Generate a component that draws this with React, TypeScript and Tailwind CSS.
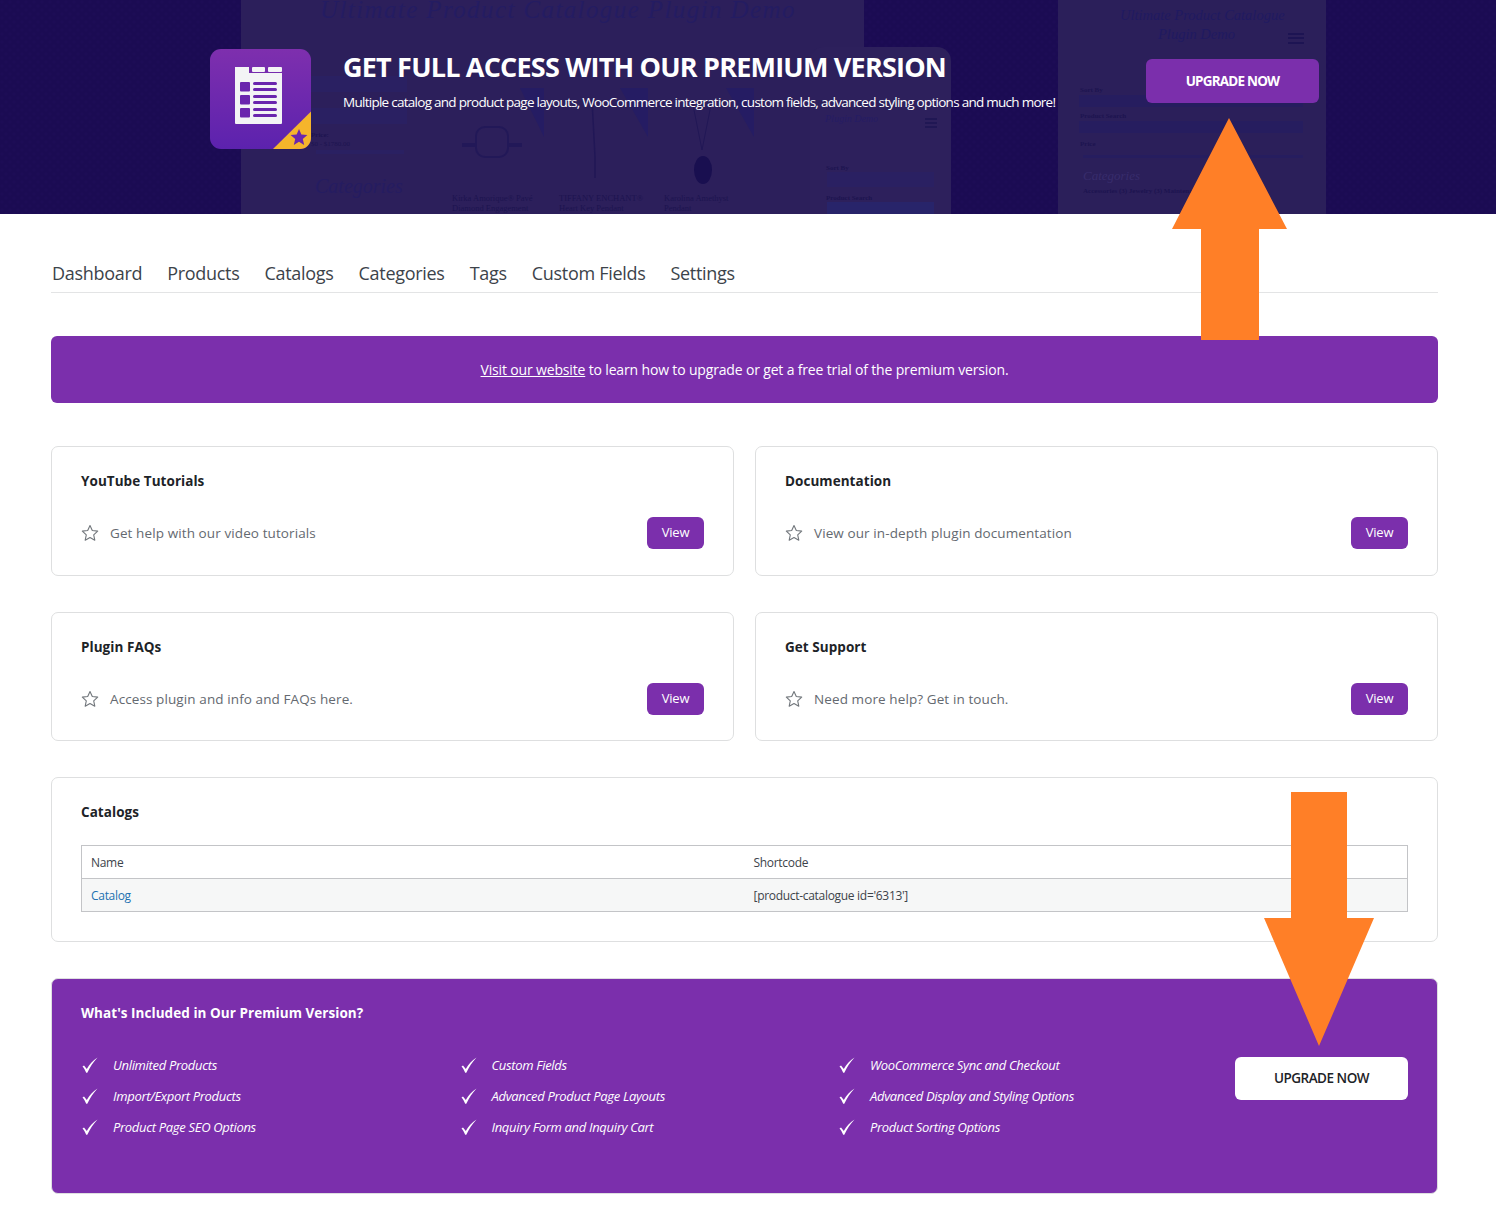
// ─── Banner backdrop (faded plugin screenshots) ──────────

function BannerBackdrop() {
  return (
    <svg className="absolute inset-0" width="1496" height="214" viewBox="0 0 1496 214" aria-hidden="true">
      <defs>
        <pattern id="banner-dots" width="8" height="8" patternUnits="userSpaceOnUse">
          <rect width="8" height="8" fill="#1b0b53" />
          <circle cx="2" cy="2" r="1.500" fill="#1d0c56" />
          <circle cx="6" cy="6" r="1.500" fill="#1d0c56" />
        </pattern>
      </defs>
      <rect width="1496" height="214" fill="url(#banner-dots)" />

      {/* Desktop screenshot */}
      <rect x="241" width="623" height="214" fill="#2c1f5b" />
      <g fontFamily="'Liberation Serif', serif">
        <text x="320" y="18" fontSize="25" fontStyle="italic" letterSpacing="1.400" fill="#241c62">Ultimate Product Catalogue Plugin Demo</text>
        <g fill="#2a2062">
          <rect x="311" y="76" width="96" height="16" />
          <rect x="311" y="108" width="96" height="16" />
          <rect x="316" y="150" width="88" height="4" />
        </g>
        <text x="311" y="137" fontSize="7" fontWeight="700" fill="#1d1450">Price:</text>
        <text x="311" y="146" fontSize="7" fill="#1d1450">$0 - $1780.00</text>
        <text x="315" y="193" fontSize="20" fontStyle="italic" fill="#251c61">Categories</text>
        <path d="M520 88h24v49zM620 88h28v49zM726 88h28v49z" fill="#251c63" />
        <rect x="476" y="127" width="32" height="30" rx="9" fill="none" stroke="#221858" strokeWidth="2" />
        <path d="M462 145h14M508 145h14" stroke="#221858" strokeWidth="4" />
        <path d="M592 100l3 57v21" fill="none" stroke="#211756" strokeWidth="1.500" />
        <path d="M692 100l10 50M712 100l-10 50" fill="none" stroke="#211756" strokeWidth="1" />
        <ellipse cx="703" cy="170" rx="9" ry="14" fill="#190f50" />
        <g fontSize="8.500" fill="#1d1450">
          <text x="452" y="201">Kirka Amorique® Pavé</text>
          <text x="452" y="211">Diamond Engagement</text>
          <text x="559" y="201">TIFFANY ENCHANT®</text>
          <text x="559" y="211">Heart Key Pendant</text>
          <text x="664" y="201">Karolina Amethyst</text>
          <text x="664" y="211">Pendant</text>
        </g>

        {/* Phone over the desktop screenshot */}
        <path d="M810 214V61a14 14 0 0 1 14-14h113a14 14 0 0 1 14 14v153z" fill="#2d205c" />
        <text x="825" y="122" fontSize="10" fontStyle="italic" fill="#251c64">Plugin Demo</text>
        <path d="M925 119h12M925 123h12M925 127h12" stroke="#1d1452" strokeWidth="1.500" />
        <text x="826" y="170" fontSize="7" fontWeight="700" fill="#1d1450">Sort By</text>
        <rect x="827" y="172" width="107" height="15" fill="#2a2062" />
        <text x="826" y="200" fontSize="7" fontWeight="700" fill="#1d1450">Product Search</text>
        <rect x="827" y="202" width="107" height="12" fill="#28246a" />

        {/* Right phone */}
        <rect x="1058" width="268" height="214" fill="#2b1f5a" />
        <text x="1120" y="20" fontSize="14.500" fontStyle="italic" fill="#201a61">Ultimate Product Catalogue</text>
        <text x="1158" y="39" fontSize="14.500" fontStyle="italic" fill="#201a61">Plugin Demo</text>
        <path d="M1288 34h16M1288 38h16M1288 43h16" stroke="#1a1252" strokeWidth="1.500" />
        <text x="1080" y="92" fontSize="7" fontWeight="700" fill="#1d1450">Sort By</text>
        <rect x="1079" y="95" width="224" height="12" fill="#261d5f" />
        <text x="1080" y="118" fontSize="7" fontWeight="700" fill="#1d1450">Product Search</text>
        <rect x="1079" y="121" width="224" height="12" fill="#261d5f" />
        <text x="1080" y="146" fontSize="7" fontWeight="700" fill="#1d1450">Price</text>
        <rect x="1083" y="155" width="220" height="3" fill="#261d5f" />
        <text x="1083" y="180" fontSize="13" fontStyle="italic" fill="#382c6c">Categories</text>
        <text x="1083" y="193" fontSize="7" fontWeight="700" fill="#1d1450">Accessories (3)   Jewelry (3)   Maintenance (1)</text>
      </g>
    </svg>
  );
}

// ─── Logo ────────────────────────────────────────────────

function PluginLogo() {
  return (
    <svg width="101" height="100" viewBox="0 0 101 100" className="shrink-0">
      <defs>
        <linearGradient id="logo-bg" x1="0" y1="0" x2="0" y2="1">
          <stop offset="0" stopColor="#7e2fae" />
          <stop offset="1" stopColor="#5c22ae" />
        </linearGradient>
        <clipPath id="logo-clip">
          <rect width="101" height="100" rx="11" />
        </clipPath>
      </defs>
      <g clipPath="url(#logo-clip)">
        <rect width="101" height="100" fill="url(#logo-bg)" />
        <path d="M101 62.500V100H63z" fill="#f5b52b" />
      </g>
      <path d="M25 18h14v6h33v50a1 1 0 0 1-1 1H26a1 1 0 0 1-1-1z" fill="#f3f4f5" />
      <rect x="42" y="18" width="13" height="5" rx="1" fill="#f3f4f5" />
      <rect x="58" y="18" width="14" height="5" rx="1" fill="#f3f4f5" />
      <g fill="#6a26ad">
        <rect x="30" y="33" width="10" height="9.500" rx="1" />
        <rect x="30" y="46" width="10" height="9.500" rx="1" />
        <rect x="30" y="59" width="10" height="9.500" rx="1" />
        <rect x="43" y="33" width="24" height="3" rx="1.500" />
        <rect x="43" y="39" width="24" height="3" rx="1.500" />
        <rect x="43" y="46" width="24" height="3" rx="1.500" />
        <rect x="43" y="52" width="24" height="3" rx="1.500" />
        <rect x="43" y="59" width="24" height="3" rx="1.500" />
        <rect x="43" y="65" width="24" height="3" rx="1.500" />
        <path d="M89 80l2.400 5.600 6 .5-4.600 4 1.400 5.900-5.200-3.200-5.200 3.200 1.400-5.900-4.600-4 6-.5z" />
      </g>
    </svg>
  );
}

// ─── Small parts ─────────────────────────────────────────

function StarOutline() {
  return (
    <svg width="18" height="18" viewBox="0 0 18 18" className="shrink-0" fill="none">
      <path d="M9 1.500l2.300 5 5.400.6-4 3.700 1.100 5.400L9 13.500l-4.800 2.700 1.100-5.400-4-3.700 5.400-.6z" stroke="#72777c" strokeWidth="1.100" strokeLinejoin="round" />
    </svg>
  );
}

function Check() {
  return (
    <svg width="16" height="16" viewBox="0 0 16 16" className="ml-px mb-[2px] shrink-0" fill="#fff">
      <path d="M.5 9.500L2 8.400l2.800 3.600C7.300 7.700 10.600 3.700 15.500.5 11.300 5 8.200 9.800 5.300 15.800H4.200C3.200 13.200 2 11.200.5 9.500z" />
    </svg>
  );
}

function HelpCard({ title, text, height }: { title: string; text: string; height: string }) {
  return (
    <div className={`flex flex-1 flex-col rounded-[7px] border border-[#dedfe0] bg-white pl-[29px] pr-[29px] pt-[24px] ${height}`}>
      <h3 className="text-[13.500px] font-bold leading-[20px] tracking-[0.05px] text-[#1d2327]">{title}</h3>
      <div className="mt-[26px] flex items-center justify-between">
        <div className="flex items-center gap-[11px]">
          <StarOutline />
          <span className="text-[13.500px] tracking-[0.1px] text-[#646970]">{text}</span>
        </div>
        <button className="h-[32px] w-[57px] rounded-[6px] bg-[#7b2fac] text-[13px] font-medium tracking-[-0.2px] text-white">View</button>
      </div>
    </div>
  );
}

const TABS = ["Dashboard", "Products", "Catalogs", "Categories", "Tags", "Custom Fields", "Settings"];

const FEATURES = [
  ["Unlimited Products", "Import/Export Products", "Product Page SEO Options"],
  ["Custom Fields", "Advanced Product Page Layouts", "Inquiry Form and Inquiry Cart"],
  ["WooCommerce Sync and Checkout", "Advanced Display and Styling Options", "Product Sorting Options"],
];

// ─── Page ────────────────────────────────────────────────

export default function App() {
  return (
    <div className="relative h-[1208px] overflow-hidden bg-white font-['Open_Sans',sans-serif] text-[#3c434a]">
      {/* Upgrade banner */}
      <header className="relative h-[214px] bg-[#1b0b53]">
        <BannerBackdrop />
        <div className="relative flex items-start pl-[210px] pt-[49px]">
          <PluginLogo />
          <div className="ml-[32px] w-[803px]">
            <h1 className="text-[27px] font-bold leading-[36px] tracking-[-0.8px] text-white">
              GET FULL ACCESS WITH OUR PREMIUM VERSION
            </h1>
            <p className="mt-[7px] text-[13.500px] leading-[20px] tracking-[-0.73px] text-white">
              Multiple catalog and product page layouts, WooCommerce integration, custom fields, advanced styling options and much more!
            </p>
          </div>
          <button className="mt-[10px] h-[44px] w-[173px] rounded-[6px] bg-[#7b2fac] text-[13.500px] font-bold tracking-[-0.8px] text-white">
            UPGRADE NOW
          </button>
        </div>
      </header>

      <main className="pl-[51px] pr-[58px]">
        {/* Tabs */}
        <nav className="mt-[44px] flex h-[35px] items-start gap-[25px] border-b border-[#e3e4e5] pl-px text-[18px] font-medium leading-[30px] tracking-[-0.3px] text-[#3c434a]">
          {TABS.map((tab) => (
            <span key={tab}>{tab}</span>
          ))}
        </nav>

        {/* Trial notice */}
        <div className="mt-[43px] flex h-[67px] items-center justify-center rounded-[6px] bg-[#7b2fac] text-[14px] tracking-[-0.16px] text-white">
          <span>
            <a className="underline">Visit our website</a> to learn how to upgrade or get a free trial of the premium version.
          </span>
        </div>

        {/* Help cards */}
        <div className="mt-[43px] flex gap-[21px]">
          <HelpCard title="YouTube Tutorials" text="Get help with our video tutorials" height="h-[130px]" />
          <HelpCard title="Documentation" text="View our in-depth plugin documentation" height="h-[130px]" />
        </div>
        <div className="mt-[36px] flex gap-[21px]">
          <HelpCard title="Plugin FAQs" text="Access plugin and info and FAQs here." height="h-[129px]" />
          <HelpCard title="Get Support" text="Need more help? Get in touch." height="h-[129px]" />
        </div>

        {/* Catalogs table */}
        <section className="mt-[36px] h-[165px] rounded-[7px] border border-[#dedfe0] bg-white px-[29px] pt-[24px]">
          <h3 className="text-[13.500px] font-bold leading-[20px] tracking-[0.05px] text-[#1d2327]">Catalogs</h3>
          <table className="mt-[23px] w-full table-fixed border border-[#c3c4c7] text-[12px] tracking-[-0.3px]">
            <tbody>
              <tr className="h-[33px] border-b border-[#c3c4c7]">
                <td className="w-[672px] pl-[9px] pt-px">Name</td>
                <td className="pt-px">Shortcode</td>
              </tr>
              <tr className="h-[33px] bg-[#f6f7f7]">
                <td className="pl-[9px] pt-px text-[#2271b1]">Catalog</td>
                <td className="pt-px">[product-catalogue id='6313']</td>
              </tr>
            </tbody>
          </table>
        </section>

        {/* Premium features */}
        <section className="mt-[36px] h-[216px] rounded-[7px] border border-[#dedfe0] bg-[#7b2fac] px-[29px] pt-[24px] text-white">
          <h3 className="text-[13.500px] font-bold leading-[20px] tracking-[0.05px]">What's Included in Our Premium Version?</h3>
          <div className="mt-[33px] flex items-start justify-between">
            <div className="flex">
              {FEATURES.map((column, i) => (
                <ul key={i} className="flex w-[378.500px] flex-col gap-[11px] last:w-[340px]">
                  {column.map((feature) => (
                    <li key={feature} className="flex h-[20px] items-center gap-[15px] text-[13px] italic tracking-[-0.32px]">
                      <Check />
                      {feature}
                    </li>
                  ))}
                </ul>
              ))}
            </div>
            <button className="mt-px h-[43px] w-[173px] rounded-[6px] bg-white pb-px text-[13.500px] font-semibold tracking-[-0.5px] text-[#1d2327]">
              UPGRADE NOW
            </button>
          </div>
        </section>
      </main>

      {/* Annotation arrows */}
      <svg className="pointer-events-none absolute left-[1172px] top-[118px]" width="116" height="222" viewBox="0 0 116 222">
        <path d="M57 0L115 111H87V222H29V111H0z" fill="#ff7f27" />
      </svg>
      <svg className="pointer-events-none absolute left-[1264px] top-[792px]" width="110" height="254" viewBox="0 0 110 254">
        <path d="M27 0H83V126H110L55 254L0 126H27z" fill="#ff7f27" />
      </svg>
    </div>
  );
}
